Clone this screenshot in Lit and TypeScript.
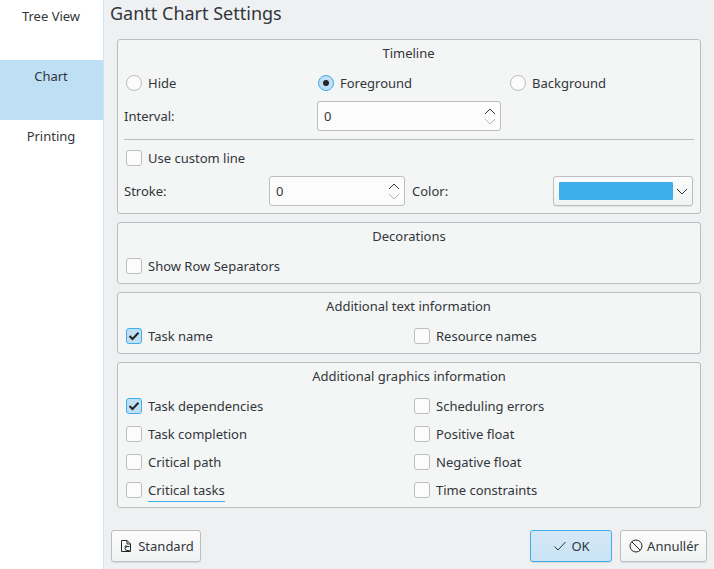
import { LitElement, html, css } from "lit";
import { customElement } from "lit/decorators.js";

const up = html`<svg width="12" height="6" viewBox="0 0 12 6"><path d="M1 6 L6 1 L11 6" fill="none" stroke="#31363b" stroke-width="1"/></svg>`;
const down = html`<svg width="12" height="6" viewBox="0 0 12 6"><path d="M1 0 L6 5 L11 0" fill="none" stroke="#b4b6b8" stroke-width="1"/></svg>`;

@customElement("app-root")
export class AppRoot extends LitElement {
  static styles = css`
    :host { display: flex; width: 714px; height: 569px; overflow: hidden; font-family: "Noto Sans", sans-serif; font-size: 13px; color: #31363b; background: #eff0f1; line-height: 18px; }
    .side { width: 103px; flex: none; background: #fff; border-right: 1px solid #cfe3f2; }
    .side div { height: 60px; box-sizing: border-box; padding: 7px 1px 0 0; text-align: center; }
    .side .sel { background: #bfdff5; }
    .main { flex: 1; min-width: 0; display: flex; flex-direction: column; padding: 0 7px 0 6px; box-sizing: border-box; }
    h1 { margin: 0; font-weight: 400; font-size: 18px; line-height: 26px; height: 39px; box-sizing: border-box; }
    .groups { display: flex; flex-direction: column; gap: 8px; margin: 0 6px 0 7px; }
    .group { background: #f4f5f5; border: 1px solid #bcbebf; border-radius: 3px; box-sizing: border-box; }
    .gt { text-align: center; height: 18px; margin-top: 4px; }
    .t1 .gt, .t3 .gt { padding-right: 1px; }
    .t1 { height: 175px; }
    .t2 { height: 62px; }
    .t3 { height: 62px; }
    .t4 { height: 146px; }
    .o { display: flex; align-items: center; gap: 6px; height: 18px; }
    .box { width: 16px; height: 16px; flex: none; box-sizing: border-box; background: #fcfcfc; border: 1px solid #bcbebf; border-radius: 3px; display: flex; align-items: center; justify-content: center; }
    .box.on { background: #bfdff5; border-color: #3daee9; }
    .radio { width: 16px; height: 16px; flex: none; box-sizing: border-box; background: #fcfcfc; border: 1px solid #bcbebf; border-radius: 50%; display: flex; align-items: center; justify-content: center; }
    .radio.on { background: #bfdff5; border-color: #3daee9; }
    .dot { width: 6px; height: 6px; border-radius: 50%; background: #232629; }
    .radios { display: grid; grid-template-columns: 192px 192px 1fr; padding-left: 8px; margin-top: 12px; }
    .field { display: flex; align-items: center; justify-content: space-between; box-sizing: border-box; height: 30px; background: #fcfcfc; border: 1px solid #bcbebf; border-radius: 3px; padding: 0 4px 0 6px; }
    .arrows { display: flex; flex-direction: column; gap: 5px; }
    .arrows svg { display: block; }
    .interval { display: flex; align-items: center; margin-top: 9px; padding-left: 6px; }
    .interval > span { width: 193px; }
    .interval .field { width: 184px; }
    .sep { height: 1px; background: #bcbebf; margin: 8px 6px 0; }
    .custom { padding-left: 8px; margin-top: 9px; }
    .stroke { display: flex; align-items: center; margin-top: 9px; padding-left: 6px; }
    .stroke > span:first-child { width: 145px; }
    .stroke .field { width: 136px; }
    .color { margin-left: 7px; width: 141px; }
    .combo { width: 140px; height: 30px; box-sizing: border-box; background: linear-gradient(#fcfcfc, #f1f2f3); border: 1px solid #bcbebf; border-radius: 3px; display: flex; align-items: center; padding: 0 4px 0 5px; gap: 3px; box-shadow: 0 1px 1px rgba(0,0,0,.08); }
    .swatch { width: 114px; height: 18px; flex: none; background: #3daee9; border-radius: 1px; }
    .single { padding-left: 8px; margin-top: 12px; }
    .two { display: grid; grid-template-columns: 288px 1fr; padding-left: 8px; margin-top: 12px; row-gap: 10px; }
    .ul { display: inline-block; border-bottom: 1px solid #3daee9; line-height: 19px; height: 21px; box-sizing: border-box; margin-bottom: -3px; }
    .foot { margin-top: 22px; display: flex; }
    .btn { box-sizing: border-box; height: 32px; display: flex; align-items: center; justify-content: center; gap: 3px; background: linear-gradient(#fcfcfc, #f1f2f3); border: 1px solid #bcbebf; border-radius: 3px; box-shadow: 0 1px 1px rgba(0,0,0,.1); }
    .btn.std { width: 90px; margin-left: 1px; gap: 4px; }
    .btn.ok { width: 82px; margin-left: auto; background: linear-gradient(#d5e9f7, #c9e3f5); border-color: #3daee9; }
    .btn.no { width: 87px; margin-left: 8px; }
  `;

  private cb(label: unknown, on = false) {
    return html`<div class="o"><span class="box ${on ? "on" : ""}">${on
      ? html`<svg width="12" height="10" viewBox="0 0 12 10"><path d="M1.5 5 L4.5 8 L10.5 1.7" fill="none" stroke="#232629" stroke-width="2"/></svg>`
      : ""}</span><span>${label}</span></div>`;
  }
  private rb(label: string, on = false) {
    return html`<div class="o"><span class="radio ${on ? "on" : ""}">${on ? html`<span class="dot"></span>` : ""}</span><span>${label}</span></div>`;
  }
  private spin() {
    return html`<div class="field"><span>0</span><span class="arrows">${up}${down}</span></div>`;
  }

  render() {
    return html`
      <div class="side"><div>Tree View</div><div class="sel">Chart</div><div>Printing</div></div>
      <div class="main">
        <h1>Gantt Chart Settings</h1>
        <div class="groups">
          <section class="group t1">
            <div class="gt">Timeline</div>
            <div class="radios">${this.rb("Hide")}${this.rb("Foreground", true)}${this.rb("Background")}</div>
            <div class="interval"><span>Interval:</span>${this.spin()}</div>
            <div class="sep"></div>
            <div class="custom">${this.cb("Use custom line")}</div>
            <div class="stroke"><span>Stroke:</span>${this.spin()}<span class="color">Color:</span>
              <div class="combo"><span class="swatch"></span><svg width="12" height="7" viewBox="0 0 12 7"><path d="M1 1 L6 6 L11 1" fill="none" stroke="#31363b"/></svg></div>
            </div>
          </section>
          <section class="group t2"><div class="gt">Decorations</div><div class="single">${this.cb("Show Row Separators")}</div></section>
          <section class="group t3"><div class="gt">Additional text information</div>
            <div class="two">${this.cb("Task name", true)}${this.cb("Resource names")}</div></section>
          <section class="group t4"><div class="gt">Additional graphics information</div>
            <div class="two">
              ${this.cb("Task dependencies", true)}${this.cb("Scheduling errors")}
              ${this.cb("Task completion")}${this.cb("Positive float")}
              ${this.cb("Critical path")}${this.cb("Negative float")}
              ${this.cb(html`<span class="ul">Critical tasks</span>`)}${this.cb("Time constraints")}
            </div></section>
        </div>
        <div class="foot">
          <div class="btn std"><svg width="16" height="16" viewBox="0 0 16 16"><path d="M3.5 2.5 H9 L12.5 6 V13.5 H3.5 Z M9 2.5 V6 H12.5" fill="none" stroke="#232629"/><path d="M11.5 8.5 H9 A2 2 0 0 0 9 12.5 H11.5 M8.5 7 L7 8.5 L8.5 10" fill="none" stroke="#232629"/></svg><span>Standard</span></div>
          <div class="btn ok"><svg width="16" height="16" viewBox="0 0 16 16"><path d="M2.5 8.5 L6 12 L13.5 4" fill="none" stroke="#31363b"/></svg><span>OK</span></div>
          <div class="btn no"><svg width="16" height="16" viewBox="0 0 16 16"><circle cx="8" cy="8" r="6" fill="none" stroke="#232629"/><path d="M3.8 3.8 L12.2 12.2" stroke="#232629"/></svg><span>Annullér</span></div>
        </div>
      </div>`;
  }
}
